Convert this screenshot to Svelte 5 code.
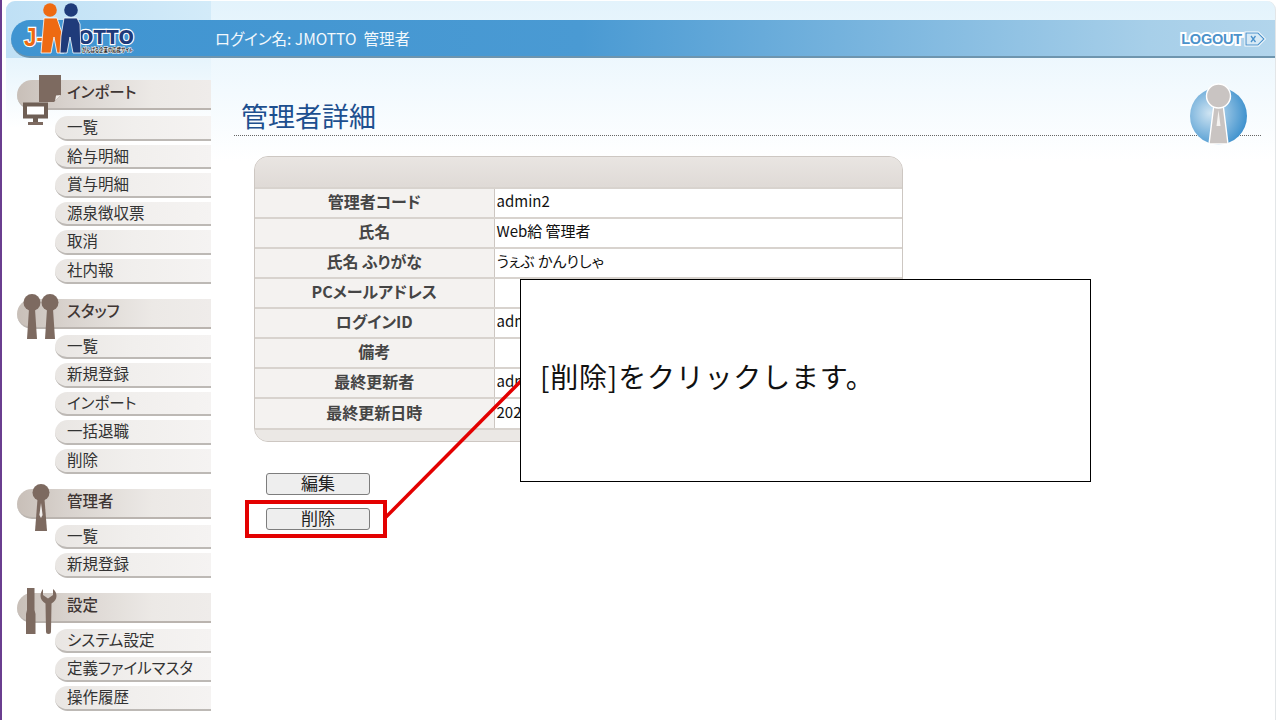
<script>
  const groups = [
    { name: 'インポート', icon: 'import', items: ['一覧', '給与明細', '賞与明細', '源泉徴収票', '取消', '社内報'] },
    { name: 'スタッフ', icon: 'staff', items: ['一覧', '新規登録', 'インポート', '一括退職', '削除'] },
    { name: '管理者', icon: 'admin', items: ['一覧', '新規登録'] },
    { name: '設定', icon: 'tools', items: ['システム設定', '定義ファイルマスタ', '操作履歴'] }
  ];
  const rows = [
    ['管理者コード', 'admin2'],
    ['氏名', 'Web給 管理者'],
    ['氏名 ふりがな', 'うぇぶ かんりしゃ'],
    ['PCメールアドレス', ''],
    ['ログインID', 'adm'],
    ['備考', ''],
    ['最終更新者', 'adm'],
    ['最終更新日時', '202']
  ];
</script>

<div class="slide">
  <div class="shell">
    <header class="header">
      <div class="bar">
        <svg class="logo" viewBox="0 0 130 58" width="130" height="58" aria-label="J-MOTTO">
          <text x="13" y="47" class="logo-j" font-size="25" textLength="20" lengthAdjust="spacingAndGlyphs">J-</text>
          <circle cx="39" cy="11" r="6.8" fill="#ee6a12" />
          <circle cx="60" cy="11" r="6.8" fill="#1f3b7a" />
          <text x="67" y="44.500" class="logo-otto" font-size="19" textLength="56" lengthAdjust="spacingAndGlyphs">OTTO</text>
          <path d="M33 19h13l6 18 1 17h-7l-3-16-3 16H30z" fill="#ee6a12" stroke="#fff" stroke-width=".8" />
          <path d="M53 19h13l3 6 1 29h-8l-3-16-3 16h-7l1-17z" fill="#1f3b7a" stroke="#fff" stroke-width=".8" />
          <text x="71" y="52.500" class="logo-tag" font-size="5.200" textLength="51" lengthAdjust="spacingAndGlyphs">がんばる企業の応援サイト</text>
        </svg>
        <div class="user">ログイン名: JMOTTO&nbsp;&nbsp;管理者</div>
        <div class="logout">
          <span class="logout-text">LOGOUT</span>
          <svg viewBox="0 0 22 16" width="22" height="16" aria-hidden="true">
            <path d="M2 2h12l6 6-6 6H2z" fill="#d8eaf6" stroke="#fff" stroke-width="3" />
            <path d="M2 2h12l6 6-6 6H2z" fill="#d8eaf6" stroke="#4b92cb" stroke-width="1.100" />
            <path d="M7 5l4.500 6M11.500 5L7 11" stroke="#4b92cb" stroke-width="1.300" fill="none" />
          </svg>
        </div>
      </div>
    </header>

    <div class="body">
      <nav class="side">
        {#each groups as g}
          <section class="group">
            <div class="group-head">
              {#if g.icon === 'import'}
                <svg class="gicon gi-import" viewBox="0 0 44 50" width="44" height="50" aria-hidden="true">
                  <path d="M17 0h22v20l-7 7H17z" fill="#7d6a60" />
                  <path d="M33 26l6-6-5 .5z" fill="#efebe8" />
                  <rect x="3" y="29.500" width="21" height="12" fill="#fff" stroke="#6f5f55" stroke-width="4" />
                  <rect x="11" y="43" width="5" height="4" fill="#6f5f55" />
                  <rect x="6" y="47" width="15" height="3" fill="#7d6a60" />
                </svg>
              {:else if g.icon === 'staff'}
                <svg class="gicon gi-staff" viewBox="0 0 44 46" width="44" height="46" aria-hidden="true">
                  <circle cx="13" cy="8.500" r="8.500" fill="#7d6a60" />
                  <circle cx="31" cy="8.500" r="8.500" fill="#7d6a60" />
                  <path d="M10 15h6l2 30H8zM28 15h6l2 30H26z" fill="#7d6a60" />
                </svg>
              {:else if g.icon === 'admin'}
                <svg class="gicon gi-admin" viewBox="0 0 20 47" width="20" height="47" aria-hidden="true">
                  <circle cx="10" cy="8.500" r="8.500" fill="#7d6a60" />
                  <path d="M6.500 15h7l2.500 32H4z" fill="#7d6a60" />
                  <path d="M10 19l1.600 12-1.600 3-1.600-3z" fill="#f2efed" />
                </svg>
              {:else}
                <svg class="gicon gi-tools" viewBox="0 0 31 47" width="31" height="47" aria-hidden="true">
                  <path d="M1 0h7.500v22l1 4v20H0V26l1-4z" fill="#7d6a60" />
                  <path d="M17 1v6l5 3.500L27 7V1c2.500 1.500 3.500 4.500 3.500 7 0 3-2 6-5 7.500l-.5 28a2.500 2.500 0 0 1-5 0l-.5-28c-3-1.500-5-4.500-5-7.500 0-2.500 1-5.500 2.500-7z" fill="#7d6a60" />
                </svg>
              {/if}
              <span>{g.name}</span>
            </div>
            <ul>
              {#each g.items as item}
                <li>{item}</li>
              {/each}
            </ul>
          </section>
        {/each}
      </nav>

      <main class="main">
        <div class="title-row">
          <h1>管理者詳細</h1>
          <svg class="badge" viewBox="0 0 60 64" width="60" height="64" aria-hidden="true">
            <defs>
              <radialGradient id="globe" cx="35%" cy="45%" r="70%">
                <stop offset="0" stop-color="#cfe4f2" />
                <stop offset="1" stop-color="#358ccb" />
              </radialGradient>
            </defs>
            <circle cx="29.500" cy="34" r="28.500" fill="url(#globe)" />
            <path d="M25 22h9l5 40H20z" fill="#c9c4c2" stroke="#fff" stroke-width="1.400" />
            <circle cx="29.500" cy="14" r="12" fill="#c9c4c2" stroke="#fff" stroke-width="1.400" />
            <path d="M29.500 28l2 16h-4z" fill="#f4f2f0" />
          </svg>
        </div>

        <div class="card">
          <div class="card-head"></div>
          <table>
            <tbody>
              {#each rows as [k, v]}
                <tr>
                  <th>{k}</th>
                  <td>{v}</td>
                </tr>
              {/each}
            </tbody>
          </table>
          <div class="card-foot"></div>
        </div>

        <div class="actions">
          <button type="button">編集</button>
          <button type="button">削除</button>
        </div>
      </main>
    </div>
  </div>

  <svg class="arrow" viewBox="0 0 1280 720" width="1280" height="720" aria-hidden="true">
    <line x1="386" y1="517" x2="522" y2="380" stroke="#e30000" stroke-width="3.500" />
  </svg>
  <div class="highlight"></div>
  <div class="callout">[削除]をクリックします。</div>
</div>

<style>
  :global(body) {
    margin: 0;
    background: #fff;
  }
  .slide {
    position: relative;
    width: 1280px;
    height: 720px;
    overflow: hidden;
    background: #fff;
    font-family: "Noto Sans CJK JP", "Liberation Sans", sans-serif;
    font-feature-settings: "palt";
    color: #333;
    border-left: 2px solid #6a3d8f;
    box-sizing: border-box;
  }
  .shell {
    margin: 1px 4px 0 4px;
    height: 719px;
    border-radius: 9px 9px 0 0;
    border-right: 1px solid #e3e6e8;
    overflow: hidden;
    background: linear-gradient(to bottom, #e3f3fc 0, #f3fafe 90px, #fff 160px);
  }
  .header {
    padding-top: 19px;
    background: linear-gradient(to right, #bfe0f5 0, #d3ebf9 205px, transparent 205px);
  }
  .bar {
    height: 36px;
    margin-left: 5px;
    border-radius: 19px 0 0 19px;
    border-bottom: 2px solid #6e95ae;
    background: linear-gradient(to right, #3f94d1 0, #4a9ad3 45%, #a7cfe9 90%, #b2d5ec 100%);
    display: flex;
    align-items: center;
  }
  .logo {
    flex: none;
    margin-top: -20px;
    overflow: visible;
  }
  .logo-j {
    font-family: "Liberation Sans", sans-serif;
    font-weight: 700;
    fill: #ee6a12;
    stroke: #fff;
    stroke-width: 2.400;
    paint-order: stroke;
  }
  .logo-otto {
    font-family: "DejaVu Sans", sans-serif;
    font-weight: 700;
    fill: #1f3b7a;
    stroke: #fff;
    stroke-width: 2.400;
    paint-order: stroke;
  }
  .logo-tag {
    font-family: "Noto Sans CJK JP", sans-serif;
    font-weight: 700;
    fill: #222;
    stroke: #fff;
    stroke-width: 1;
    paint-order: stroke;
  }
  .user {
    margin-left: 74px;
    color: #f2f8fc;
    font-size: 15.500px;
    white-space: pre;
  }
  .logout {
    margin-left: auto;
    margin-right: 9px;
    padding-top: 2px;
    display: flex;
    align-items: center;
    gap: 2px;
  }
  .logout-text {
    font-family: "Liberation Sans", sans-serif;
    font-weight: 700;
    font-size: 14.500px;
    color: #4b92cb;
    -webkit-text-stroke: 4px #fff;
    paint-order: stroke fill;
    letter-spacing: -0.2px;
  }
  .body {
    display: flex;
    background: linear-gradient(to bottom, #e6f4fc 0, #fff 70px) 0 0 / 205px 100% no-repeat;
  }
  .side {
    flex: none;
    width: 205px;
    box-sizing: border-box;
    padding: 22px 0 0 11px;
    display: flex;
    flex-direction: column;
    gap: 15px;
  }
  .group-head {
    position: relative;
    height: 28px;
    border-radius: 15px 0 0 15px;
    border-bottom: 2px solid #bab4af;
    background: linear-gradient(to right, #c8bfb8 0, #d8d2cd 25%, #ece9e6 70%, #efecea 100%);
    display: flex;
    align-items: center;
    padding-left: 50px;
    font-size: 15.500px;
    font-weight: 500;
    color: #3f3634;
  }
  .group-head span {
    margin-top: -6px;
  }
  .gicon {
    position: absolute;
  }
  .gi-import { left: 5px; top: -5px; }
  .gi-staff { left: 2px; top: -5px; }
  .gi-admin { left: 14px; top: -5px; }
  .gi-tools { left: 9px; top: -5px; }
  ul {
    list-style: none;
    margin: 6px 0 0 38px;
    padding: 0;
    display: flex;
    flex-direction: column;
    gap: 4px;
  }
  li {
    height: 21.600px;
    border-radius: 13px 0 0 13px;
    border-bottom: 2px solid #bdb9b5;
    background: linear-gradient(to right, #e9e6e3 0, #f1efed 50%, #f5f3f2 100%);
    display: flex;
    align-items: center;
    padding: 0 0 1px 12px;
    font-size: 15.500px;
    line-height: 19.600px;
    color: #333;
  }
  .main {
    flex: 1;
    min-width: 0;
    padding: 0 14px 0 23px;
  }
  .title-row {
    position: relative;
    height: 78px;
    box-sizing: border-box;
    border-bottom: 1px dotted #666;
    display: flex;
    align-items: flex-end;
  }
  h1 {
    margin: 0 0 1px 7px;
    font-size: 27px;
    font-weight: 400;
    line-height: 36px;
    color: #1d4f8f;
    font-feature-settings: normal;
  }
  .badge {
    position: absolute;
    right: 12px;
    top: 24px;
  }
  .card {
    width: 649px;
    box-sizing: border-box;
    margin: 20px 0 0 20px;
    border: 1px solid #cdc7c2;
    border-radius: 14px;
    overflow: hidden;
    background: #ebe8e5;
  }
  .card-head {
    height: 30px;
    background: linear-gradient(to bottom, #e9e5e2, #dfdad6);
  }
  table {
    width: 100%;
    border-collapse: collapse;
    table-layout: fixed;
    background: #fff;
  }
  tr {
    height: 30px;
  }
  th, td {
    padding: 0 0 4px;
    line-height: 20px;
    border-top: 2px solid #d8d3ce;
    box-sizing: border-box;
  }
  th {
    width: 239px;
    background: #f4f2f0;
    font-size: 16px;
    font-weight: 700;
    color: #454545;
    border-right: 1px solid #cdc7c2;
    text-align: center;
  }
  td {
    padding-left: 2px;
    font-size: 15px;
    color: #111;
  }
  .card-foot {
    height: 13px;
    border-top: 2px solid #d8d3ce;
    box-sizing: border-box;
    background: #ebe8e5;
  }
  .actions {
    margin: 31px 0 0 32px;
    display: flex;
    flex-direction: column;
    align-items: flex-start;
    gap: 13px;
  }
  button {
    width: 104px;
    height: 22px;
    padding: 0 0 3px;
    border: 1px solid #7d7d7d;
    border-radius: 3px;
    background: #eeeeee;
    font-family: inherit;
    font-size: 17px;
    line-height: 18px;
    color: #222;
    box-sizing: border-box;
  }
  .arrow {
    position: absolute;
    left: -2px;
    top: 0;
    pointer-events: none;
  }
  .highlight {
    position: absolute;
    left: 243px;
    top: 500px;
    width: 142px;
    height: 38px;
    box-sizing: border-box;
    border: 4px solid #e30000;
  }
  .callout {
    position: absolute;
    left: 518px;
    top: 279px;
    width: 571px;
    height: 203px;
    box-sizing: border-box;
    border: 1px solid #000;
    background: #fff;
    padding: 0 0 10px 19px;
    display: flex;
    align-items: center;
    font-size: 28px;
    letter-spacing: 0.8px;
    color: #111;
    font-feature-settings: normal;
  }
</style>
